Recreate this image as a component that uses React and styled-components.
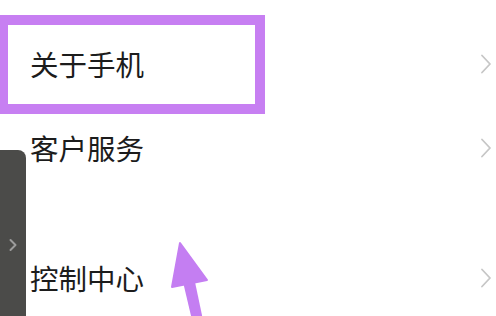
import React from 'react';
import styled, { createGlobalStyle } from 'styled-components';

const GlobalStyle = createGlobalStyle`
  html, body {
    margin: 0;
    padding: 0;
    background: #ffffff;
  }
  body {
    font-family: "Noto Sans CJK SC", "Noto Sans", sans-serif;
  }
`;

const Screen = styled.div`
  position: relative;
  width: 496px;
  height: 316px;
  overflow: hidden;
  background: #ffffff;
`;

const List = styled.div`
  display: flex;
  flex-direction: column;
  padding-top: 22px;
`;

const Row = styled.div`
  display: flex;
  align-items: center;
  justify-content: space-between;
  height: 84px;
  padding: 0 4px 0 30px;
  margin-top: ${(p) => (p.gapBefore ? '46px' : '0')};
`;

const Label = styled.span`
  font-size: 28.5px;
  line-height: 1;
  color: #1c1c1c;
`;

const Chevron = styled.svg`
  width: 12px;
  height: 20px;
  flex-shrink: 0;
`;

const Highlight = styled.div`
  position: absolute;
  left: -2px;
  top: 15px;
  width: 267px;
  height: 99px;
  box-sizing: border-box;
  border: 10px solid #c77ff2;
  pointer-events: none;
`;

const SideTab = styled.div`
  position: absolute;
  left: 0;
  top: 150px;
  bottom: 0;
  width: 26px;
  background: #4b4b49;
  border-top-right-radius: 8px;
  display: flex;
  justify-content: center;
  padding-top: 88px;
  box-sizing: border-box;
`;

const Pointer = styled.svg`
  position: absolute;
  left: 0;
  top: 0;
  pointer-events: none;
`;

const RowChevron = () => (
  <Chevron viewBox="0 0 12 20">
    <path d="M2 1.5 L10 10 L2 18.5" fill="none" stroke="#c6c6c6" strokeWidth="1.8" strokeLinecap="round" strokeLinejoin="round" />
  </Chevron>
);

const items = [
  { label: '关于手机' },
  { label: '客户服务' },
  { label: '控制中心', gapBefore: true },
];

export default function App() {
  return (
    <>
      <GlobalStyle />
      <Screen>
        <List>
          {items.map((item) => (
            <Row key={item.label} gapBefore={item.gapBefore}>
              <Label>{item.label}</Label>
              <RowChevron />
            </Row>
          ))}
        </List>
        <Highlight />
        <SideTab>
          <svg width="10" height="14" viewBox="0 0 10 14">
            <path d="M2.5 2 L7.5 7 L2.5 12" fill="none" stroke="#9c9c9c" strokeWidth="2" strokeLinecap="round" strokeLinejoin="round" />
          </svg>
        </SideTab>
        <Pointer width="496" height="316" viewBox="0 0 496 316">
          <polygon points="180,243 172,287 207,280" fill="#c47ef2" stroke="#c47ef2" strokeWidth="2" strokeLinejoin="round" />
          <polygon points="183,282 195,282 203,320 192,320" fill="#c47ef2" />
        </Pointer>
      </Screen>
    </>
  );
}
